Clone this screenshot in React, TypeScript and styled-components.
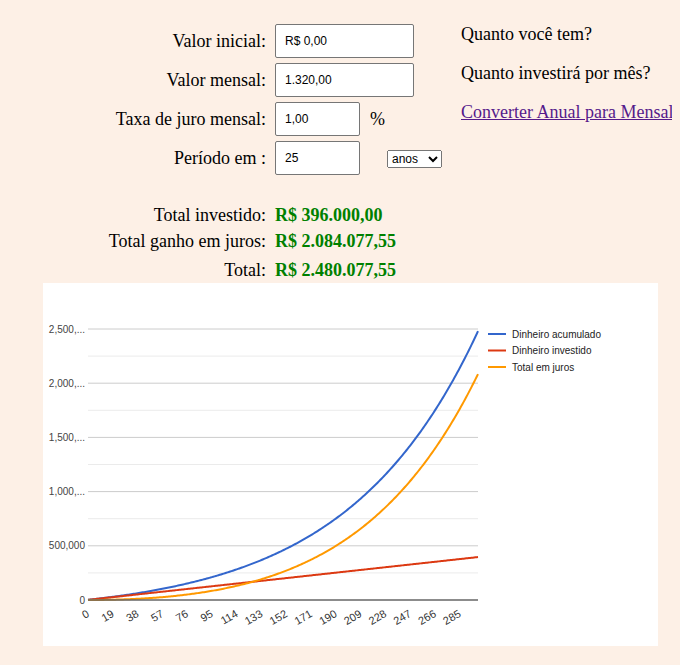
import styled, { createGlobalStyle } from 'styled-components';

const MONTHLY = 1320;
const RATE = 0.01;
const MONTHS = 300;

const PLOT_LEFT = 45;
const PLOT_RIGHT = 435;
const PLOT_TOP = 46;
const PLOT_BOTTOM = 317;
const Y_MAX = 2500000;

const xAt = (i: number) => PLOT_LEFT + (i * (PLOT_RIGHT - PLOT_LEFT)) / (MONTHS - 1);
const yAt = (v: number) => PLOT_BOTTOM - (v * (PLOT_BOTTOM - PLOT_TOP)) / Y_MAX;

const series = (() => {
  const acc: string[] = [];
  const inv: string[] = [];
  const jur: string[] = [];
  for (let i = 0; i < MONTHS; i++) {
    const n = i + 1;
    const total = (MONTHLY * (Math.pow(1 + RATE, n) - 1)) / RATE;
    const invested = MONTHLY * n;
    const x = xAt(i).toFixed(2);
    acc.push(`${x},${yAt(total).toFixed(2)}`);
    inv.push(`${x},${yAt(invested).toFixed(2)}`);
    jur.push(`${x},${yAt(total - invested).toFixed(2)}`);
  }
  return { acc: acc.join(' '), inv: inv.join(' '), jur: jur.join(' ') };
})();

const majorTicks = [
  { v: 2500000, label: '2,500,...' },
  { v: 2000000, label: '2,000,...' },
  { v: 1500000, label: '1,500,...' },
  { v: 1000000, label: '1,000,...' },
  { v: 500000, label: '500,000' },
];
const minorTicks = [2250000, 1750000, 1250000, 750000, 250000];
const xTicks = Array.from({ length: 16 }, (_, k) => k * 19);

const legend = [
  { color: '#3366cc', label: 'Dinheiro acumulado' },
  { color: '#dc3912', label: 'Dinheiro investido' },
  { color: '#ff9900', label: 'Total em juros' },
];

function GrowthChart() {
  return (
    <svg width="615" height="363" viewBox="0 0 615 363">
      {minorTicks.map((v) => (
        <line key={v} x1={PLOT_LEFT} x2={PLOT_RIGHT} y1={yAt(v)} y2={yAt(v)} stroke="#ebebeb" />
      ))}
      {majorTicks.map((t) => (
        <g key={t.v}>
          <line x1={PLOT_LEFT} x2={PLOT_RIGHT} y1={yAt(t.v)} y2={yAt(t.v)} stroke="#cccccc" />
          <text x={42} y={yAt(t.v) + 3.5} textAnchor="end" fontSize="10" fill="#444">
            {t.label}
          </text>
        </g>
      ))}
      <text x={42} y={PLOT_BOTTOM + 3.5} textAnchor="end" fontSize="10" fill="#444">
        0
      </text>
      <polyline points={series.acc} fill="none" stroke="#3366cc" strokeWidth="2" />
      <polyline points={series.inv} fill="none" stroke="#dc3912" strokeWidth="2" />
      <polyline points={series.jur} fill="none" stroke="#ff9900" strokeWidth="2" />
      <line x1={PLOT_LEFT} x2={PLOT_RIGHT} y1={PLOT_BOTTOM} y2={PLOT_BOTTOM} stroke="#666" strokeWidth="1.5" />
      {xTicks.map((t) => {
        const x = xAt(t) + 2;
        const y = PLOT_BOTTOM + 16;
        return (
          <text
            key={t}
            x={x}
            y={y}
            textAnchor="end"
            fontSize="11"
            fill="#333"
            transform={`rotate(-30 ${x} ${y})`}
          >
            {t}
          </text>
        );
      })}
      {legend.map((l, i) => (
        <g key={l.label}>
          <line x1={445} x2={463} y1={51 + i * 16.5} y2={51 + i * 16.5} stroke={l.color} strokeWidth="2" />
          <text x={469} y={51 + i * 16.5 + 3.5} fontSize="10" fill="#222">
            {l.label}
          </text>
        </g>
      ))}
    </svg>
  );
}

export default function App() {
  return (
    <>
      <GlobalStyle />
      <Form>
        <Label>Valor inicial:</Label>
        <Field>
          <TextInput $width={139} defaultValue="R$ 0,00" />
        </Field>
        <Note>Quanto você tem?</Note>

        <Label>Valor mensal:</Label>
        <Field>
          <TextInput $width={139} defaultValue="1.320,00" />
        </Field>
        <Note>Quanto investirá por mês?</Note>

        <Label>Taxa de juro mensal:</Label>
        <Field $gap={10}>
          <TextInput $width={85} defaultValue="1,00" />
          <span>%</span>
        </Field>
        <Note>
          <Link href="#">Converter Anual para Mensal</Link>
        </Note>

        <Label>Período em :</Label>
        <Field $gap={27}>
          <TextInput $width={85} defaultValue="25" />
          <PeriodSelect defaultValue="anos">
            <option value="anos">anos</option>
            <option value="meses">meses</option>
          </PeriodSelect>
        </Field>
        <div />
      </Form>

      <Results>
        <ResultLabel>Total investido:</ResultLabel>
        <Value>R$ 396.000,00</Value>
        <ResultLabel>Total ganho em juros:</ResultLabel>
        <Value>R$ 2.084.077,55</Value>
        <ResultLabel $spaced>Total:</ResultLabel>
        <Value $spaced>R$ 2.480.077,55</Value>
      </Results>

      <ChartCard>
        <GrowthChart />
      </ChartCard>
    </>
  );
}

const GlobalStyle = createGlobalStyle`
  body {
    margin: 8px;
    background: #fdf0e6;
    font-family: "Liberation Serif", "Times New Roman", serif;
    font-size: 18px;
    color: #000;
  }
  svg text {
    font-family: "Liberation Sans", Arial, sans-serif;
  }
`;

const Form = styled.div`
  display: grid;
  grid-template-columns: 258px 177px auto;
  grid-auto-rows: 34px;
  column-gap: 9px;
  row-gap: 5px;
  padding-top: 16px;
`;

const Label = styled.div`
  text-align: right;
  align-self: center;
  line-height: 21px;
`;

const Field = styled.div<{ $gap?: number }>`
  display: flex;
  align-items: center;
  gap: ${({ $gap }) => $gap ?? 0}px;
`;

const TextInput = styled.input<{ $width: number }>`
  width: ${({ $width }) => $width}px;
  height: 34px;
  box-sizing: border-box;
  border: 1px solid #767676;
  border-radius: 2px;
  padding: 0 9px;
  background: #fff;
  font-family: "Liberation Sans", Arial, sans-serif;
  font-size: 12px;
  color: #000;
`;

const PeriodSelect = styled.select`
  width: 55px;
  height: 18px;
  font-family: "Liberation Sans", Arial, sans-serif;
  font-size: 12px;
  margin-top: 2px;
`;

const Note = styled.div`
  align-self: start;
  line-height: 21px;
  white-space: nowrap;
`;

const Link = styled.a`
  color: #551a8b;
  text-decoration: underline;
`;

const Results = styled.div`
  display: grid;
  grid-template-columns: 258px auto;
  column-gap: 9px;
  row-gap: 5px;
  margin-top: 30px;
  line-height: 21px;
`;

const ResultLabel = styled.div<{ $spaced?: boolean }>`
  text-align: right;
  margin-top: ${({ $spaced }) => ($spaced ? 3 : 0)}px;
`;

const Value = styled.div<{ $spaced?: boolean }>`
  color: #008000;
  font-weight: 700;
  margin-top: ${({ $spaced }) => ($spaced ? 3 : 0)}px;
`;

const ChartCard = styled.div`
  width: 615px;
  height: 363px;
  margin: 2px 0 0 35px;
  background: #fff;

  svg {
    display: block;
  }
`;
